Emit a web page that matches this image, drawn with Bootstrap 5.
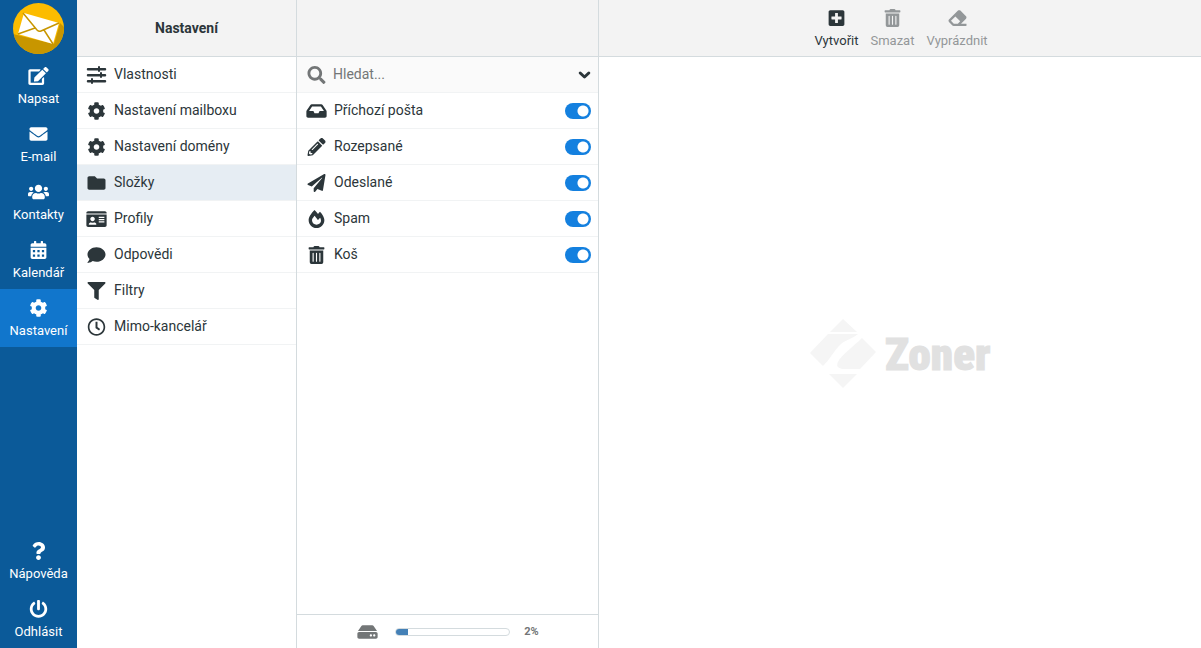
<!DOCTYPE html>
<html lang="cs">
<head>
<meta charset="utf-8">
<meta name="viewport" content="width=device-width, initial-scale=1">
<title>Nastavení – Složky</title>
<link rel="stylesheet" href="https://cdn.jsdelivr.net/npm/bootstrap@5.3.0/dist/css/bootstrap.min.css">
<style>
  :root { --ink: #2c363a; --line: #d4dbde; --row: #f1f3f4; --blue: #0b5a99; }
  body { font-family: Roboto, "Liberation Sans", sans-serif; font-size: 14px; line-height: 21px; color: var(--ink); }
  a { color: inherit; text-decoration: none; }
  .ico { width: 21px; height: 18px; fill: currentColor; flex: none; display: block; }

  .taskbar { width: 77px; background: var(--blue); color: #fff; font-size: 13px; line-height: 20px; }
  .brand { height: 57px; }
  .task { height: 58px; padding-top: 10px; gap: 4px; color: #fff; }
  .task:hover, .task.active { background: #1176cc; color: #fff; }

  .pane-menu { width: 220px; border-right: 1px solid var(--line); }
  .pane-folders { width: 302px; border-right: 1px solid var(--line); }
  .pane-head { height: 57px; background: #f3f3f3; border-bottom: 1px solid var(--line); flex: none; font-size: 14px; }

  .rows { --bs-list-group-color: var(--ink); --bs-list-group-bg: #fff; --bs-list-group-border-color: var(--row); }
  .rows.list-group > .list-group-item { height: 36px; padding: 0 7px 0 9px; gap: 7px; border-width: 0 0 1px; margin: 0; }
  .rows .list-group-item.active { background: #e6edf3; color: var(--ink); border-color: var(--row); }

  .finder { height: 36px; padding: 0 7px 0 9px; gap: 6px; background: #fafafa; border-bottom: 1px solid var(--row); color: #737677; }
  .finder input { font-size: 14px; line-height: 21px; min-width: 0; background: none; border: 0; outline: 0; color: var(--ink); }
  .finder input::placeholder { color: #737677; opacity: 1; }
  .finder button { color: var(--ink); line-height: 1; }
  .finder button .ico { width: 14px; height: 13px; stroke: currentColor; stroke-width: 1px; }

  .rows .form-switch { padding: 1px 0 0; margin: 0; min-height: 0; }
  .rows .form-switch .form-check-input { display: block; float: none; width: 26px; height: 16px; margin: 0; background-color: #1480df; border: 0;
    background-image: radial-gradient(circle at 18px 8px, #fff 5px, transparent 6px); background-size: 100% 100%; background-position: 0 0; }
  .rows .form-switch .form-check-input:not(:checked) { background-color: #b5bdc2; background-image: radial-gradient(circle at 8px 8px, #fff 5px, transparent 6px); }

  .quota { height: 34px; border-top: 1px solid var(--line); color: #737677; font-size: 11px; gap: 14px; padding-left: 1px; }
  .quota .ico { margin-right: 3px; }
  .quota .progress { width: 115px; height: 8px; background: #fff; border: 1px solid var(--line); border-radius: 4px; }
  .quota .progress-bar { background: #4480b6; }

  .pane-tools { padding-left: 2px; }
  .tool { --bs-btn-padding-x: 6px; --bs-btn-padding-y: 0; --bs-btn-border-width: 0px; --bs-btn-color: var(--ink); --bs-btn-font-size: 13px;
    --bs-btn-disabled-color: #939799; --bs-btn-disabled-opacity: 1; line-height: 20px; height: 56px; padding-top: 9px; gap: 4px; }
  .watermark { width: 184px; height: 72px; }
  .watermark text { font-family: "Roboto Condensed", "Open Sans Condensed", Roboto, "Liberation Sans", sans-serif; font-weight: 900; font-size: 45px; }
</style>
</head>
<body>
<svg class="d-none" aria-hidden="true">
  <symbol id="i-edit" viewBox="0 0 576 512"><path d="M402.6 83.2l90.2 90.2c3.8 3.8 3.8 10 0 13.8L274.4 405.6l-92.8 10.3c-12.4 1.4-22.9-9.1-21.5-21.5l10.3-92.8L388.8 83.2c3.8-3.8 10-3.8 13.8 0zm162-22.9l-48.8-48.8c-15.2-15.2-39.9-15.2-55.2 0l-35.4 35.4c-3.8 3.8-3.8 10 0 13.8l90.2 90.2c3.8 3.8 10 3.8 13.8 0l35.4-35.4c15.2-15.3 15.2-40 0-55.2zM384 346.2V448H64V128h229.8c3.2 0 6.2-1.3 8.5-3.5l40-40c7.6-7.6 2.2-20.5-8.5-20.5H48C21.5 64 0 85.5 0 112v352c0 26.5 21.5 48 48 48h352c26.5 0 48-21.5 48-48V306.2c0-10.7-12.9-16-20.5-8.5l-40 40c-2.2 2.3-3.5 5.3-3.5 8.5z"/></symbol>
  <symbol id="i-envelope" viewBox="0 0 512 512"><path d="M502.3 190.8c3.9-3.1 9.7-.2 9.7 4.7V400c0 26.5-21.5 48-48 48H48c-26.5 0-48-21.5-48-48V195.6c0-5 5.7-7.8 9.7-4.7 22.4 17.4 52.1 39.5 154.1 113.6 21.1 15.4 56.7 47.8 92.2 47.6 35.7.3 72-32.8 92.3-47.6 102-74.1 131.6-96.3 154-113.7zM256 320c23.2.4 56.6-29.2 73.4-41.4 132.7-96.3 142.8-104.7 173.4-128.7 5.8-4.5 9.2-11.5 9.2-18.9v-19c0-26.5-21.5-48-48-48H48c-26.5 0-48 21.5-48 48v19c0 7.4 3.4 14.3 9.2 18.9 30.6 23.9 40.7 32.4 173.4 128.7 16.8 12.2 50.2 41.8 73.4 41.4z"/></symbol>
  <symbol id="i-users" viewBox="0 0 640 512"><path d="M96 224c35.3 0 64-28.7 64-64s-28.7-64-64-64-64 28.7-64 64 28.7 64 64 64zm448 0c35.3 0 64-28.7 64-64s-28.7-64-64-64-64 28.7-64 64 28.7 64 64 64zm32 32h-64c-17.6 0-33.5 7.1-45.1 18.6 40.3 22.1 68.9 62 75.1 109.4h66c17.7 0 32-14.3 32-32v-32c0-35.3-28.7-64-64-64zm-256 0c61.9 0 112-50.1 112-112S381.9 32 320 32 208 82.1 208 144s50.1 112 112 112zm76.8 32h-8.3c-20.8 10-43.9 16-68.5 16s-47.6-6-68.5-16h-8.3C179.6 288 128 339.6 128 403.2V432c0 26.5 21.5 48 48 48h288c26.5 0 48-21.5 48-48v-28.8c0-63.6-51.6-115.2-115.2-115.2zm-223.7-13.4C161.5 263.1 145.6 256 128 256H64c-35.3 0-64 28.7-64 64v32c0 17.7 14.3 32 32 32h65.9c6.3-47.4 34.9-87.3 75.2-109.4z"/></symbol>
  <symbol id="i-calendar" viewBox="0 0 448 512"><path fill-rule="evenodd" d="M400 64h-48V16c0-8.800-7.200-16-16-16h-32c-8.800 0-16 7.200-16 16v48H160V16c0-8.800-7.200-16-16-16h-32c-8.800 0-16 7.200-16 16v48H48C21.500 64 0 85.500 0 112v48h448v-48c0-26.500-21.500-48-48-48zM0 192v272c0 26.500 21.500 48 48 48h352c26.500 0 48-21.500 48-48V192zM64 256h64v64H64zm128 0h64v64h-64zm128 0h64v64h-64zM64 384h64v64H64zm128 0h64v64h-64zm128 0h64v64h-64z"/></symbol>
  <symbol id="i-cog" viewBox="0 0 512 512"><path d="M487.4 315.7l-42.6-24.6c4.3-23.2 4.3-47 0-70.2l42.6-24.6c4.9-2.800 7.100-8.600 5.500-14-11.100-35.600-30-67.800-54.700-94.600-3.800-4.100-10-5.100-14.800-2.300L380.800 110c-17.900-15.400-38.500-27.300-60.800-35.100V25.800c0-5.600-3.900-10.500-9.400-11.700-36.700-8.200-74.300-7.800-109.200 0-5.500 1.200-9.400 6.100-9.400 11.700V75c-22.200 7.900-42.800 19.800-60.800 35.100L88.700 85.500c-4.900-2.800-11-1.900-14.800 2.300-24.700 26.700-43.600 58.900-54.700 94.600-1.700 5.400.6 11.200 5.500 14L67.300 221c-4.300 23.200-4.300 47 0 70.200l-42.600 24.600c-4.900 2.800-7.100 8.600-5.500 14 11.100 35.600 30 67.800 54.700 94.600 3.800 4.100 10 5.100 14.800 2.300l42.600-24.600c17.900 15.400 38.500 27.300 60.800 35.100v49.200c0 5.600 3.900 10.500 9.400 11.700 36.700 8.200 74.300 7.800 109.200 0 5.500-1.200 9.400-6.100 9.400-11.700v-49.200c22.200-7.900 42.800-19.800 60.800-35.100l42.600 24.600c4.900 2.800 11 1.900 14.800-2.300 24.700-26.700 43.600-58.900 54.700-94.600 1.500-5.500-.7-11.300-5.600-14.100zM256 336c-44.100 0-80-35.900-80-80s35.900-80 80-80 80 35.900 80 80-35.900 80-80 80z"/></symbol>
  <symbol id="i-question" viewBox="0 0 384 512"><path d="M202 0C122.200 0 70.500 32.700 29.900 91c-7.400 10.600-5.100 25.100 5.200 32.900l43.100 32.700c10.400 7.900 25.100 6 33.300-4.100 25-31.400 43.600-49.400 82.700-49.400 30.800 0 68.800 19.800 68.800 49.600 0 22.600-18.600 34.100-49 51.200-35.400 19.900-82.300 44.600-82.300 106.400V320c0 13.300 10.700 24 24 24h72.500c13.300 0 24-10.700 24-24v-5.800c0-42.900 125.300-44.600 125.300-160.600C377.500 66.300 286.900 0 202 0zM192 373.500c-38.200 0-69.300 31.100-69.300 69.300S153.800 512 192 512s69.300-31.100 69.300-69.300-31.100-69.200-69.300-69.200z"/></symbol>
  <symbol id="i-power" viewBox="0 0 512 512"><path d="M400 54.100c63 45 104 118.600 104 201.900 0 136.800-110.800 247.700-247.500 248C120 504.300 8.200 393 8 256.400 7.900 173.100 48.900 99.300 111.800 54.200c11.700-8.300 28-4.800 35 7.700L162.600 90c5.900 10.500 3.100 23.800-6.600 31-41.500 30.800-68 79.600-68 134.900-.1 92.300 74.500 168.100 168 168.100 91.600 0 168.600-74.200 168-169.100-.3-51.800-24.700-101.800-68.100-134-9.700-7.200-12.400-20.500-6.500-30.900l15.800-28.100c7-12.400 23.200-16.100 34.800-7.800zM296 264V24c0-13.300-10.700-24-24-24h-32c-13.300 0-24 10.700-24 24v240c0 13.300 10.700 24 24 24h32c13.300 0 24-10.700 24-24z"/></symbol>
  <symbol id="i-sliders" viewBox="0 0 21 18"><path d="M2 2h10V1a1 1 0 0 1 2 0v1h5a1 1 0 0 1 0 2.500h-5V5a1 1 0 0 1-2 0v-.5H2A1 1 0 0 1 2 2zm0 6h12V7a1 1 0 0 1 2 0v1h3a1 1 0 0 1 0 2.500h-3v.5a1 1 0 0 1-2 0v-.5H2A1 1 0 0 1 2 8zm0 6h3v-1a1 1 0 0 1 2 0v1h12a1 1 0 0 1 0 2.500H7v.5a1 1 0 0 1-2 0v-.5H2A1 1 0 0 1 2 14z"/></symbol>
  <symbol id="i-folder" viewBox="0 0 512 512"><path d="M464 128H272l-64-64H48C21.500 64 0 85.500 0 112v288c0 26.500 21.500 48 48 48h416c26.500 0 48-21.500 48-48V176c0-26.500-21.500-48-48-48z"/></symbol>
  <symbol id="i-idcard" viewBox="0 0 576 512"><path fill-rule="evenodd" d="M528 32H48C21.500 32 0 53.500 0 80v16h576V80c0-26.500-21.500-48-48-48zM0 432c0 26.500 21.500 48 48 48h480c26.500 0 48-21.500 48-48V128H0zM352 192h160v32H352zm0 64h160v32H352zm0 64h160v32H352zM176 192c35.300 0 64 28.700 64 64s-28.700 64-64 64-64-28.700-64-64 28.700-64 64-64zM67.100 396.200C75.500 370.500 99.600 352 128 352h8.200c12.300 5.100 25.700 8 39.800 8s27.600-2.900 39.800-8h8.200c28.400 0 52.500 18.500 60.900 44.200 3.200 9.900-5.200 19.800-15.600 19.800H82.700c-10.400 0-18.800-10-15.600-19.800z"/></symbol>
  <symbol id="i-comment" viewBox="0 0 512 512"><path d="M256 32C114.600 32 0 125.100 0 240c0 49.600 21.400 95 57 130.700C44.500 421.100 2.700 466 2.200 466.500c-2.200 2.300-2.800 5.700-1.500 8.700S4.800 480 8 480c66.300 0 116-31.800 140.600-51.400 32.700 12.300 69 19.400 107.400 19.400 141.400 0 256-93.100 256-208S397.400 32 256 32z"/></symbol>
  <symbol id="i-filter" viewBox="0 0 512 512"><path d="M488 0H24C2.700 0-8 25.900 7.100 41L192 225.900V432c0 7.800 3.800 15.200 10.200 19.700l80 56C298 518.700 320 507.500 320 488V225.900L504.900 41C520 25.900 509.300 0 488 0z"/></symbol>
  <symbol id="i-clock" viewBox="0 0 512 512"><path d="M256 8C119 8 8 119 8 256s111 248 248 248 248-111 248-248S393 8 256 8zm0 448c-110.500 0-200-89.500-200-200S145.500 56 256 56s200 89.500 200 200-89.500 200-200 200zm61.800-104.400l-84.900-61.700c-3.100-2.300-4.900-5.900-4.900-9.700V116c0-6.600 5.400-12 12-12h32c6.600 0 12 5.400 12 12v141.700l66.800 48.600c5.400 3.900 6.500 11.400 2.600 16.800L334.600 349c-3.900 5.300-11.400 6.500-16.800 2.600z"/></symbol>
  <symbol id="i-search" viewBox="0 0 512 512"><path d="M505 442.700L405.300 343c-4.500-4.500-10.600-7-17-7H372c27.600-35.300 44-79.700 44-128C416 93.100 322.900 0 208 0S0 93.100 0 208s93.100 208 208 208c48.300 0 92.700-16.400 128-44v16.300c0 6.400 2.500 12.500 7 17l99.700 99.700c9.400 9.400 24.600 9.400 33.900 0l28.300-28.300c9.400-9.400 9.400-24.600.1-34zM208 336c-70.700 0-128-57.200-128-128 0-70.700 57.200-128 128-128 70.700 0 128 57.200 128 128 0 70.700-57.200 128-128 128z"/></symbol>
  <symbol id="i-chevron" viewBox="0 0 14 13"><path fill="none" stroke-width="3" stroke-linecap="round" stroke-linejoin="round" d="M3.200 5L7.500 9 11.800 5"/></symbol>
  <symbol id="i-inbox" viewBox="0 0 576 512"><path d="M567.900 243.900L462.300 85.400A48 48 0 0 0 422.300 64H153.700a48 48 0 0 0-39.900 21.400L8.100 243.900A48 48 0 0 0 0 270.500V400c0 26.500 21.500 48 48 48h480c26.500 0 48-21.500 48-48V270.500a48 48 0 0 0-8.100-26.600zM162.300 128h251.400l85.400 128H376l-32 64H232l-32-64H76.900z"/></symbol>
  <symbol id="i-pencil" viewBox="0 0 512 512"><path d="M497.900 142.100l-46.100 46.100c-4.700 4.700-12.300 4.700-17 0l-111-111c-4.700-4.700-4.700-12.300 0-17l46.100-46.100c18.700-18.700 49.100-18.700 67.900 0l60.100 60.100c18.800 18.700 18.800 49.100 0 67.900zM284.200 99.800L21.600 362.400.4 483.900c-2.900 16.400 11.400 30.600 27.800 27.800l121.500-21.300 262.600-262.600c4.700-4.700 4.700-12.300 0-17l-111-111c-4.800-4.700-12.400-4.700-17.100 0zM124.100 339.900c-5.500-5.500-5.500-14.300 0-19.800l154-154c5.500-5.500 14.300-5.500 19.800 0s5.500 14.300 0 19.800l-154 154c-5.500 5.500-14.300 5.500-19.800 0zM88 424h48v36.300l-64.500 11.300-31.100-31.100L51.700 376H88v48z"/></symbol>
  <symbol id="i-plane" viewBox="0 0 512 512"><path d="M476 3.200L12.500 270.600c-18.100 10.400-15.800 35.600 2.200 43.200L121 358.400l287.300-253.200c5.500-4.900 13.300 2.600 8.600 8.300L176 407v80.500c0 23.600 28.500 32.900 42.500 15.800L282 426l124.600 52.200c14.200 6 30.400-2.900 33-18.200l72-432C515 7.800 493.300-6.800 476 3.200z"/></symbol>
  <symbol id="i-fire" viewBox="0 0 448 512"><path d="M323.600 51.200c-20.800 19.300-39.600 39.600-56.300 60C240.100 73.600 206.300 35.500 168 0 69.700 91.200 0 210 0 281.600 0 408.900 100.300 512 224 512s224-103.100 224-230.400c0-53.300-52-163.100-124.400-230.400zm-19.500 340.700C282.400 407 255.700 416 226.900 416 154.700 416 96 368.300 96 290.800c0-38.600 24.300-72.700 72.800-130.800 6.900 8 98.800 125.300 98.800 125.300l58.700-66.800c4.100 6.800 7.900 13.500 11.200 19.900 27.400 52.200 15.800 119-33.400 153.500z"/></symbol>
  <symbol id="i-trash" viewBox="0 0 448 512"><path d="M32 464a48 48 0 0 0 48 48h288a48 48 0 0 0 48-48V128H32zm272-256a16 16 0 0 1 32 0v224a16 16 0 0 1-32 0zm-96 0a16 16 0 0 1 32 0v224a16 16 0 0 1-32 0zm-96 0a16 16 0 0 1 32 0v224a16 16 0 0 1-32 0zM432 32H312l-9.400-18.700A24 24 0 0 0 281.100 0H166.800a23.700 23.700 0 0 0-21.400 13.300L136 32H16A16 16 0 0 0 0 48v32a16 16 0 0 0 16 16h416a16 16 0 0 0 16-16V48a16 16 0 0 0-16-16z"/></symbol>
  <symbol id="i-plus" viewBox="0 0 448 512"><path d="M400 32H48C21.500 32 0 53.500 0 80v352c0 26.500 21.500 48 48 48h352c26.500 0 48-21.500 48-48V80c0-26.500-21.500-48-48-48zm-32 252c0 6.600-5.400 12-12 12h-92v92c0 6.600-5.400 12-12 12h-56c-6.600 0-12-5.400-12-12v-92H92c-6.600 0-12-5.400-12-12v-56c0-6.600 5.400-12 12-12h92v-92c0-6.600 5.400-12 12-12h56c6.600 0 12 5.400 12 12v92h92c6.600 0 12 5.400 12 12v56z"/></symbol>
  <symbol id="i-eraser" viewBox="0 0 512 512"><path d="M497.900 273.900c18.800-18.700 18.800-49.100 0-67.800l-160-160c-18.700-18.800-49.100-18.800-67.800 0l-256 256c-18.800 18.700-18.800 49.100 0 67.800l96 96A48 48 0 0 0 144 480h356c6.600 0 12-5.400 12-12v-40c0-6.600-5.400-12-12-12H355.900zM195.300 211.300l137.400 137.400L265.400 416H150.600l-80-80z"/></symbol>
  <symbol id="i-hdd" viewBox="0 0 576 512"><path d="M576 304v96c0 26.500-21.500 48-48 48H48c-26.500 0-48-21.500-48-48v-96c0-26.500 21.500-48 48-48h480c26.500 0 48 21.500 48 48zm-48-80a79.600 79.600 0 0 1 30.800 6.200L462.300 85.400A48 48 0 0 0 422.300 64H153.700a48 48 0 0 0-39.900 21.400L17.200 230.200A79.600 79.600 0 0 1 48 224zm-48 96c-17.700 0-32 14.300-32 32s14.300 32 32 32 32-14.300 32-32-14.300-32-32-32zm-96 0c-17.700 0-32 14.300-32 32s14.300 32 32 32 32-14.300 32-32-14.300-32-32-32z"/></symbol>
</svg>

<div class="d-flex min-vh-100">
  <nav class="taskbar d-flex flex-column flex-shrink-0" aria-label="Hlavní nabídka">
    <div class="brand d-flex align-items-center justify-content-center">
      <svg width="51" height="51" viewBox="0 0 51 51" role="img" aria-label="E-mail">
        <clipPath id="disc"><circle cx="25.500" cy="25.500" r="25.500"/></clipPath>
        <g clip-path="url(#disc)">
          <path fill="#fcbc00" d="M0 0h51v51H0z"/>
          <path fill="#c89600" d="M4 32L41 41 47 20 51 24V51H0V31z"/>
          <path fill="#fff" d="M11 10L46 20 40 41 5 31z"/>
          <path fill="none" stroke="#c89600" stroke-width="1.500" d="M10 10L24 27Q26 29 28 28L46 20M5 31L22 25M40 41L31 27"/>
        </g>
      </svg>
    </div>
    <a href="#" class="task d-flex flex-column align-items-center"><svg class="ico"><use href="#i-edit"/></svg>Napsat</a>
    <a href="#" class="task d-flex flex-column align-items-center"><svg class="ico"><use href="#i-envelope"/></svg>E-mail</a>
    <a href="#" class="task d-flex flex-column align-items-center"><svg class="ico"><use href="#i-users"/></svg>Kontakty</a>
    <a href="#" class="task d-flex flex-column align-items-center"><svg class="ico"><use href="#i-calendar"/></svg>Kalendář</a>
    <a href="#" class="task active d-flex flex-column align-items-center" aria-current="page"><svg class="ico"><use href="#i-cog"/></svg>Nastavení</a>
    <a href="#" class="task mt-auto d-flex flex-column align-items-center"><svg class="ico"><use href="#i-question"/></svg>Nápověda</a>
    <a href="#" class="task d-flex flex-column align-items-center"><svg class="ico"><use href="#i-power"/></svg>Odhlásit</a>
  </nav>

  <section class="pane-menu d-flex flex-column flex-shrink-0">
    <h1 class="pane-head d-flex align-items-center justify-content-center fw-bold m-0">Nastavení</h1>
    <div class="rows list-group list-group-flush">
      <a href="#" class="list-group-item d-flex align-items-center"><svg class="ico"><use href="#i-sliders"/></svg>Vlastnosti</a>
      <a href="#" class="list-group-item d-flex align-items-center"><svg class="ico"><use href="#i-cog"/></svg>Nastavení mailboxu</a>
      <a href="#" class="list-group-item d-flex align-items-center"><svg class="ico"><use href="#i-cog"/></svg>Nastavení domény</a>
      <a href="#" class="list-group-item active d-flex align-items-center" aria-current="true"><svg class="ico"><use href="#i-folder"/></svg>Složky</a>
      <a href="#" class="list-group-item d-flex align-items-center"><svg class="ico"><use href="#i-idcard"/></svg>Profily</a>
      <a href="#" class="list-group-item d-flex align-items-center"><svg class="ico"><use href="#i-comment"/></svg>Odpovědi</a>
      <a href="#" class="list-group-item d-flex align-items-center"><svg class="ico"><use href="#i-filter"/></svg>Filtry</a>
      <a href="#" class="list-group-item d-flex align-items-center"><svg class="ico"><use href="#i-clock"/></svg>Mimo-kancelář</a>
    </div>
  </section>

  <section class="pane-folders d-flex flex-column flex-shrink-0">
    <div class="pane-head"></div>
    <form class="finder d-flex align-items-center">
      <label for="find"><svg class="ico"><use href="#i-search"/></svg></label>
      <input id="find" type="text" class="flex-grow-1 p-0" placeholder="Hledat..." aria-label="Hledat">
      <button type="button" class="btn border-0 p-0" aria-label="Možnosti hledání"><svg class="ico"><use href="#i-chevron"/></svg></button>
    </form>
    <ul class="rows list-group list-group-flush">
      <li class="list-group-item d-flex align-items-center"><svg class="ico"><use href="#i-inbox"/></svg><label class="flex-grow-1" for="f1">Příchozí pošta</label><div class="form-check form-switch"><input class="form-check-input" type="checkbox" role="switch" id="f1" checked></div></li>
      <li class="list-group-item d-flex align-items-center"><svg class="ico"><use href="#i-pencil"/></svg><label class="flex-grow-1" for="f2">Rozepsané</label><div class="form-check form-switch"><input class="form-check-input" type="checkbox" role="switch" id="f2" checked></div></li>
      <li class="list-group-item d-flex align-items-center"><svg class="ico"><use href="#i-plane"/></svg><label class="flex-grow-1" for="f3">Odeslané</label><div class="form-check form-switch"><input class="form-check-input" type="checkbox" role="switch" id="f3" checked></div></li>
      <li class="list-group-item d-flex align-items-center"><svg class="ico"><use href="#i-fire"/></svg><label class="flex-grow-1" for="f4">Spam</label><div class="form-check form-switch"><input class="form-check-input" type="checkbox" role="switch" id="f4" checked></div></li>
      <li class="list-group-item d-flex align-items-center"><svg class="ico"><use href="#i-trash"/></svg><label class="flex-grow-1" for="f5">Koš</label><div class="form-check form-switch"><input class="form-check-input" type="checkbox" role="switch" id="f5" checked></div></li>
    </ul>
    <div class="quota mt-auto d-flex align-items-center justify-content-center">
      <svg class="ico"><use href="#i-hdd"/></svg>
      <div class="progress" role="progressbar" aria-label="Využité místo" aria-valuenow="2" aria-valuemin="0" aria-valuemax="100"><div class="progress-bar" style="width:10%"></div></div>
      <span class="fw-bold">2%</span>
    </div>
  </section>

  <main class="d-flex flex-column flex-grow-1">
    <div class="pane-head pane-tools d-flex justify-content-center" role="toolbar" aria-label="Složky">
      <button type="button" class="tool btn d-flex flex-column align-items-center"><svg class="ico"><use href="#i-plus"/></svg>Vytvořit</button>
      <button type="button" class="tool btn d-flex flex-column align-items-center" disabled><svg class="ico"><use href="#i-trash"/></svg>Smazat</button>
      <button type="button" class="tool btn d-flex flex-column align-items-center" disabled><svg class="ico"><use href="#i-eraser"/></svg>Vyprázdnit</button>
    </div>
    <div class="flex-grow-1 d-flex align-items-center justify-content-center">
      <svg class="watermark" viewBox="0 0 184 72" role="img" aria-label="Zoner">
        <g fill="#f5f5f5">
          <path d="M35 2L49 15H22z"/>
          <path d="M20 17H50C44 22 36 23 31 29C26 34 22 42 15 49L2 36z"/>
          <path d="M54 21L68 35 52 52H34Q26 50 31 43C37 35 45 30 54 21z"/>
          <path d="M21 57H49L35 71z"/>
        </g>
        <text x="77" y="53" fill="#e1e1e1" stroke="#e1e1e1" stroke-width="1">Zoner</text>
      </svg>
    </div>
  </main>
</div>
<script src="https://cdn.jsdelivr.net/npm/bootstrap@5.3.0/dist/js/bootstrap.bundle.min.js"></script>
</body>
</html>
